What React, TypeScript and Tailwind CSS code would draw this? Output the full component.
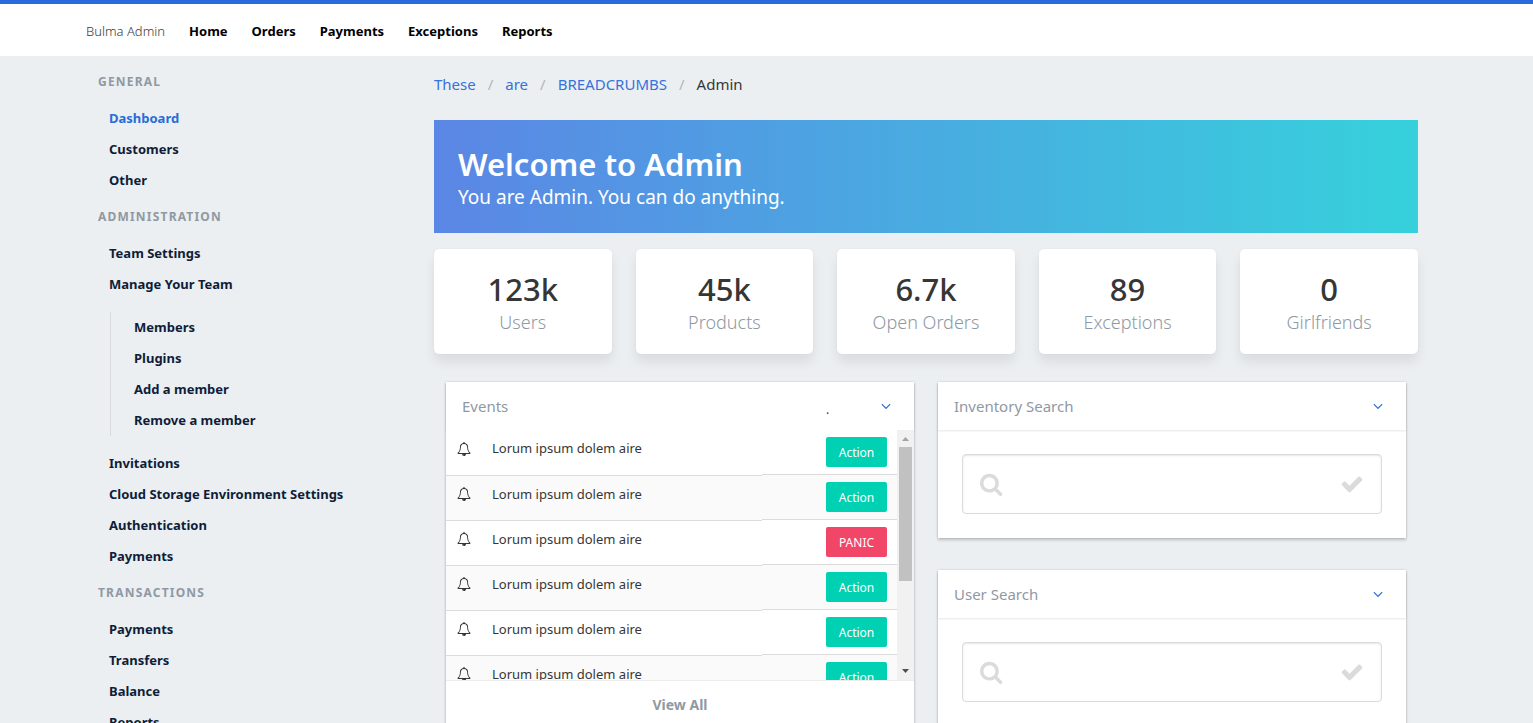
import React from "react";

const ICONS = {
  search: {
    box: "0 -128 1792 1792",
    d: "M1152 704q0-185-131.5-316.5t-316.5-131.5-316.5 131.5-131.5 316.5 131.5 316.5 316.5 131.5 316.5-131.5 131.5-316.5zm512 832q0 52-38 90t-90 38q-54 0-90-38l-343-342q-179 124-399 124-143 0-273.5-55.5t-225-150-150-225-55.5-273.5 55.5-273.5 150-225 225-150 273.5-55.5 273.5 55.5 225 150 150 225 55.5 273.5q0 220-124 399l343 343q37 37 37 90z",
  },
  check: {
    box: "0 0 1792 1792",
    d: "M1671 566q0 40-28 68l-724 724-136 136q-28 28-68 28t-68-28l-136-136-362-362q-28-28-28-68t28-68l136-136q28-28 68-28t68 28l294 295 656-657q28-28 68-28t68 28l136 136q28 28 28 68z",
  },
  bell: {
    box: "0 0 1792 1792",
    d: "M912 1696q0-16-16-16-59 0-101.5-42.5t-42.5-101.5q0-16-16-16t-16 16q0 73 51.5 124.5t124.5 51.5q16 0 16-16zm-666-288h1300q-266-300-266-832 0-51-24-105t-69-103-121.5-80.5-169.5-31.5-169.5 31.5-121.5 80.5-69 103-24 105q0 532-266 832zm1482 0q0 52-38 90t-90 38h-448q0 106-75 181t-181 75-181-75-75-181h-448q-52 0-90-38t-38-90q50-42 91-88t85-119.5 74.5-158.5 50-206 19.5-260q0-152 117-282.5t307-158.5q-8-19-8-39 0-40 28-68t68-28 68 28 28 68q0 20-8 39 190 28 307 158.5t117 282.5q0 139 19.5 260t50 206 74.5 158.5 85 119.5 91 88z",
  },
  angleDown: {
    box: "0 0 1792 1792",
    d: "M1395 736q0 13-10 23l-466 466q-10 10-23 10t-23-10l-466-466q-10-10-10-23t10-23l50-50q10-10 23-10t23 10l393 393 393-393q10-10 23-10t23 10l50 50q10 10 10 23z",
  },
};

function Icon({ name, className }: { name: keyof typeof ICONS; className: string }) {
  return (
    <svg viewBox={ICONS[name].box} fill="currentColor" aria-hidden="true" className={className}>
      <path d={ICONS[name].d} />
    </svg>
  );
}

type Item = { label: string; active?: boolean; children?: string[] };

const MENU: { title: string; items: Item[] }[] = [
  {
    title: "General",
    items: [{ label: "Dashboard", active: true }, { label: "Customers" }, { label: "Other" }],
  },
  {
    title: "Administration",
    items: [
      { label: "Team Settings" },
      {
        label: "Manage Your Team",
        children: ["Members", "Plugins", "Add a member", "Remove a member"],
      },
      { label: "Invitations" },
      { label: "Cloud Storage Environment Settings" },
      { label: "Authentication" },
      { label: "Payments" },
    ],
  },
  {
    title: "Transactions",
    items: [
      { label: "Payments" },
      { label: "Transfers" },
      { label: "Balance" },
      { label: "Reports" },
    ],
  },
];

const STATS = [
  ["123k", "Users"],
  ["45k", "Products"],
  ["6.7k", "Open Orders"],
  ["89", "Exceptions"],
  ["0", "Girlfriends"],
];

const EVENTS = ["Action", "Action", "PANIC", "Action", "Action", "Action", "Action", "Action", "Action"];

function Navbar() {
  return (
    <nav className="border-t-4 border-[#276cda] bg-white pr-[17px]">
      <div className="mx-auto flex h-[52px] max-w-[1344px] items-center gap-6 pt-[3px] text-[13px] font-bold text-black">
        <a href="#" className="font-light text-[#3a3a3a]">
          Bulma Admin
        </a>
        {["Home", "Orders", "Payments", "Exceptions", "Reports"].map((t) => (
          <a key={t} href="#">
            {t}
          </a>
        ))}
      </div>
    </nav>
  );
}

function MenuLink({ label, active }: Item) {
  return (
    <a
      href="#"
      className={`block px-[11px] py-[5px] text-[13px] leading-[21px] font-bold ${
        active ? "text-[#276cda]" : "text-[#0f1d38]"
      }`}
    >
      {label}
    </a>
  );
}

function Sidebar() {
  return (
    <aside className="flex flex-col gap-3 pt-[17px]">
      {MENU.map((group) => (
        <section key={group.title}>
          <h2 className="mb-3 text-xs leading-[18px] font-bold tracking-widest text-[#8f99a3] uppercase">
            {group.title}
          </h2>
          <ul>
            {group.items.map((item) => (
              <li key={item.label}>
                <MenuLink {...item} />
                {item.children && (
                  <ul className="my-3 ml-3 border-l border-[#dbdbdb] pl-3">
                    {item.children.map((c) => (
                      <li key={c}>
                        <MenuLink label={c} />
                      </li>
                    ))}
                  </ul>
                )}
              </li>
            ))}
          </ul>
        </section>
      ))}
    </aside>
  );
}

function Breadcrumbs() {
  return (
    <nav aria-label="breadcrumbs" className="pt-4">
      <ol className="flex gap-3 text-[15px] leading-6 text-[#3672dc]">
        {["These", "are", "BREADCRUMBS"].map((t) => (
          <li key={t} className="flex gap-3">
            <a href="#">{t}</a>
            <span className="text-[#b5b5b5]">/</span>
          </li>
        ))}
        <li>
          <a href="#" aria-current="page" className="text-[#363636]">
            Admin
          </a>
        </li>
      </ol>
    </nav>
  );
}

function CardHeader({ title, mark }: { title: string; mark?: string }) {
  return (
    <header className="flex h-12 items-center px-4 text-[15px] text-[#8f99a3] shadow-[0_1px_2px_rgba(10,10,10,0.1)]">
      <h2 className="flex-1">{title}</h2>
      {mark && <span className="w-12 pt-2 text-xs text-[#363636]">{mark}</span>}
      <button type="button" aria-label={`Toggle ${title}`} className="p-1 text-[#276cda]">
        <Icon name="angleDown" className="size-4" />
      </button>
    </header>
  );
}

const CARD = "bg-white shadow-[0_2px_3px_rgba(10,10,10,0.2),0_0_2px_rgba(10,10,10,0.15)]";

function EventsCard() {
  return (
    <section className={CARD}>
      <CardHeader title="Events" mark="." />
      <div className="flex h-[250px]">
        <div className="flex-1 overflow-hidden">
          <table className="w-full text-[13px] text-[#363636]">
            <tbody>
              {EVENTS.map((action, i) => {
                const left = i > 0 ? "shadow-[inset_0_1px_0_#dbdbdb]" : "";
                return (
                  <tr key={i} className={`h-[45px] ${i % 2 ? "bg-[#fafafa]" : "bg-white"}`}>
                    <td className={`w-[35px] pt-3 pl-[11px] align-top ${left}`}>
                      <Icon name="bell" className="size-3.5" />
                    </td>
                    <td className={`pl-[11px] align-top leading-[21px] ${i > 0 ? "pt-[9px]" : "pt-2"} ${left}`}>
                      Lorum ipsum dolem aire
                    </td>
                    <td className="w-[135px] pt-[7px] pr-[10px] align-top shadow-[inset_0_-1px_0_#dbdbdb]">
                      <button
                        type="button"
                        className={`ml-auto block h-[30px] w-[61px] rounded-xs pt-0.5 text-xs text-white ${
                          action === "PANIC" ? "bg-[#f14668]" : "bg-[#00d1b2]"
                        }`}
                      >
                        {action}
                      </button>
                    </td>
                  </tr>
                );
              })}
            </tbody>
          </table>
        </div>
        <div className="flex w-[17px] flex-col items-center bg-[#f1f1f1]" aria-hidden="true">
          <svg viewBox="0 0 17 17" className="size-[17px] text-[#a3a3a3]" fill="currentColor">
            <path d="M5 11 8.5 7 12 11z" />
          </svg>
          <div className="h-[134px] w-[13px] bg-[#c1c1c1]" />
          <svg viewBox="0 0 17 17" className="mt-auto size-[17px] text-[#505050]" fill="currentColor">
            <path d="M5 6 8.5 10 12 6z" />
          </svg>
        </div>
      </div>
      <footer className="flex h-12 items-center justify-center border-t border-[#ededed]">
        <a href="#" className="text-sm font-bold text-[#8f99a3]">
          View All
        </a>
      </footer>
    </section>
  );
}

function SearchCard({ title }: { title: string }) {
  return (
    <section className={CARD}>
      <CardHeader title={title} />
      <div className="p-6">
        <div className="flex h-[60px] items-center gap-3 rounded border border-[#dbdbdb] px-[17px] text-[#dbdbdb] shadow-[inset_0_1px_2px_rgba(10,10,10,0.1)]">
          <Icon name="search" className="size-6" />
          <input
            type="text"
            aria-label={title}
            className="min-w-0 flex-1 bg-transparent text-2xl text-[#363636] outline-none"
          />
          <Icon name="check" className="size-6" />
        </div>
      </div>
    </section>
  );
}

export default function App() {
  return (
    <div className="h-screen overflow-hidden bg-[#ebeff2] font-['Noto_Sans','Open_Sans',sans-serif]">
      <Navbar />
      <div className="pr-[17px]">
        <div className="mx-auto grid max-w-[1320px] grid-cols-4 gap-6">
          <Sidebar />
          <main className="col-span-3 min-w-0">
            <Breadcrumbs />
            <section className="mt-6 bg-linear-to-r/srgb from-[#5b86e5] to-[#36d1dc] px-6 pt-6 pb-[22px] text-white">
              <h1 className="text-[31px] leading-10 font-semibold">Welcome to Admin</h1>
              <p className="text-[19px] leading-[27px]">You are Admin. You can do anything.</p>
            </section>
            <section className="mt-4 grid grid-cols-5 gap-6 text-center">
              {STATS.map(([value, label]) => (
                <article
                  key={label}
                  className="rounded-[5px] bg-white pt-5 pb-[18px] shadow-[0_8px_12px_rgba(10,10,10,0.08),0_0_2px_rgba(10,10,10,0.06)]"
                >
                  <p className="text-[31px] leading-10 font-medium text-[#363636]">{value}</p>
                  <p className="text-lg leading-[27px] font-light text-[#8f99a3]">{label}</p>
                </article>
              ))}
            </section>
            <div className="mt-7 grid grid-cols-2 items-start gap-6 px-3">
              <EventsCard />
              <div className="flex flex-col gap-8">
                <SearchCard title="Inventory Search" />
                <SearchCard title="User Search" />
              </div>
            </div>
          </main>
        </div>
      </div>
    </div>
  );
}
